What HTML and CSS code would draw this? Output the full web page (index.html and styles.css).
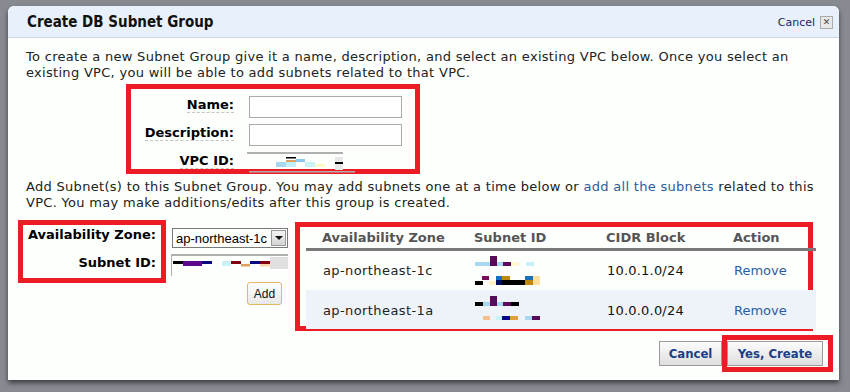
FILE: index.html
```html
<!DOCTYPE html>
<html lang="en">
<head>
    <link rel="stylesheet" href="styles.css">
    <meta charset="UTF-8">
    <title>Create DB Subnet Group</title>
</head>
<body>
    <div class="dialog">
        <div class="dialog-head">
            <h1>Create DB Subnet Group</h1>
            <div class="head-tools">
                <a href="#" class="cancel-link">Cancel</a>
                <span class="close-box">&#x2715;</span>
            </div>
        </div>

        <div class="dialog-body">
            <p class="intro">To create a new Subnet Group give it a name, description, and select an existing VPC below. Once you select an existing VPC, you will be able to add subnets related to that VPC.</p>

            <div class="mark group-fields">
                <div class="field-row">
                    <label class="field-label"><span>Name:</span></label>
                    <input type="text" class="text-input">
                </div>
                <div class="field-row">
                    <label class="field-label"><span>Description:</span></label>
                    <input type="text" class="text-input">
                </div>
                <div class="field-row">
                    <label class="field-label"><span>VPC ID:</span></label>
                    <div class="vpc-value">
                        <svg width="108" height="22" viewBox="0 0 108 22">
                            <rect x="0" y="0" width="96" height="2" fill="#b0b0b0"/>
                            <rect x="29" y="10" width="10" height="5" fill="#a8d8f0"/>
                            <rect x="39" y="5" width="10" height="1.5" fill="#000"/>
                            <rect x="39" y="8" width="10" height="2" fill="#e0a060"/>
                            <rect x="39" y="10" width="10" height="5" fill="#c0f0f8"/>
                            <rect x="49" y="7" width="9" height="3" fill="#8cc8f0"/>
                            <rect x="58" y="10" width="10" height="5" fill="#c8f4f8"/>
                            <rect x="68" y="12" width="10" height="3" fill="#fff8c8"/>
                            <rect x="88" y="5" width="8" height="13" fill="#e8e8e8"/>
                            <rect x="88" y="10" width="8" height="2" fill="#000"/>
                            <rect x="2" y="19" width="106" height="1.5" fill="#b0b0b0"/>
                        </svg>
                    </div>
                </div>
            </div>

            <p class="intro second">Add Subnet(s) to this Subnet Group. You may add subnets one at a time below or <a href="#">add all the subnets</a> related to this VPC. You may make additions/edits after this group is created.</p>

            <div class="subnet-area">
                <div class="mark zone-labels">
                    <div class="zone-label">Availability Zone:</div>
                    <div class="zone-label">Subnet ID:</div>
                </div>

                <div class="zone-inputs">
                    <div class="zone-select">
                        <span class="zone-value">ap-northeast-1c</span>
                        <span class="drop-btn"><span class="arrow"></span></span>
                    </div>
                    <div class="subnet-input">
                        <svg width="117" height="22" viewBox="0 0 117 22">
                            <rect x="0" y="0" width="117" height="2" fill="#b0b0b0"/>
                            <rect x="0" y="0" width="1" height="22" fill="#b0b0b0"/>
                            <rect x="2" y="7" width="10" height="3" fill="#000"/>
                            <rect x="12" y="7" width="19" height="5" fill="#5a0a8a"/>
                            <rect x="31" y="7" width="10" height="3" fill="#0a0a80"/>
                            <rect x="51" y="7" width="9" height="5" fill="#c8f4f8"/>
                            <rect x="60" y="7" width="10" height="3" fill="#800010"/>
                            <rect x="70" y="10" width="9" height="2.5" fill="#e0a060"/>
                            <rect x="79" y="7" width="10" height="3" fill="#0a0a80"/>
                            <rect x="89" y="7" width="10" height="3" fill="#800010"/>
                            <rect x="89" y="10" width="10" height="2.5" fill="#f8d8a8"/>
                            <rect x="99" y="3" width="18" height="12" fill="#e0e0e0"/>
                        </svg>
                    </div>
                    <button class="add-btn">Add</button>
                </div>

                <div class="mark table-mark">
                    <table class="subnet-table">
                        <thead>
                            <tr>
                                <th class="col-zone">Availability Zone</th>
                                <th class="col-subnet">Subnet ID</th>
                                <th class="col-cidr">CIDR Block</th>
                                <th class="col-action">Action</th>
                            </tr>
                        </thead>
                        <tbody>
                            <tr>
                                <td class="zone-cell">ap-northeast-1c</td>
                                <td>
                                    <svg width="70" height="32" viewBox="0 0 70 32">
                                        <rect x="1" y="7" width="17" height="4" fill="#a8d8f0"/>
                                        <rect x="16" y="1" width="7" height="10" fill="#5a0a5a"/>
                                        <rect x="23" y="7" width="6" height="4" fill="#a8d8f0"/>
                                        <rect x="29" y="7" width="8" height="4" fill="#5a0a5a"/>
                                        <rect x="37" y="7" width="8" height="4" fill="#fff8d0"/>
                                        <rect x="52" y="7" width="8" height="4" fill="#c8f4f8"/>
                                        <rect x="1" y="26" width="8" height="4" fill="#000"/>
                                        <rect x="8" y="21" width="7" height="4" fill="#7a0a5a"/>
                                        <rect x="15" y="26" width="7" height="4" fill="#fff4c0"/>
                                        <rect x="22" y="21" width="6" height="4" fill="#1a70b8"/>
                                        <rect x="22" y="25" width="6" height="5" fill="#001060"/>
                                        <rect x="28" y="21" width="8" height="4" fill="#c08810"/>
                                        <rect x="28" y="25" width="23" height="5" fill="#000"/>
                                        <rect x="51" y="21" width="8" height="4" fill="#1a70b8"/>
                                        <rect x="51" y="25" width="8" height="5" fill="#c08810"/>
                                        <rect x="59" y="21" width="7" height="9" fill="#fce0a0"/>
                                    </svg>
                                </td>
                                <td class="cidr">10.0.1.0/24</td>
                                <td><a href="#" class="remove-link">Remove</a></td>
                            </tr>
                            <tr class="alt">
                                <td class="zone-cell">ap-northeast-1a</td>
                                <td>
                                    <svg width="70" height="32" viewBox="0 0 70 32">
                                        <rect x="1" y="7" width="8" height="4" fill="#000"/>
                                        <rect x="9" y="7" width="7" height="4" fill="#a8d8f0"/>
                                        <rect x="16" y="1" width="7" height="10" fill="#5a0a5a"/>
                                        <rect x="23" y="7" width="6" height="4" fill="#a8d8f0"/>
                                        <rect x="29" y="7" width="8" height="4" fill="#5a0a5a"/>
                                        <rect x="37" y="7" width="8" height="4" fill="#000"/>
                                        <rect x="9" y="21" width="7" height="4" fill="#f4c090"/>
                                        <rect x="22" y="21" width="6" height="4" fill="#c8f4f8"/>
                                        <rect x="28" y="21" width="8" height="4" fill="#0a0a80"/>
                                        <rect x="36" y="21" width="8" height="4" fill="#e0a040"/>
                                        <rect x="51" y="21" width="7" height="4" fill="#a8d8f0"/>
                                        <rect x="58" y="21" width="8" height="4" fill="#5a0a5a"/>
                                    </svg>
                                </td>
                                <td class="cidr">10.0.0.0/24</td>
                                <td><a href="#" class="remove-link">Remove</a></td>
                            </tr>
                        </tbody>
                    </table>
                </div>
            </div>
        </div>

        <div class="dialog-foot">
            <button class="btn cancel-btn">Cancel</button>
            <div class="mark create-mark">
                <button class="btn">Yes, Create</button>
            </div>
        </div>
    </div>
</body>
</html>
```

FILE: styles.css
```css
body {
    margin: 0;
    padding: 6px 0 0 8px;
    height: 392px;
    box-sizing: border-box;
    overflow: hidden;
    background-color: #878a90;
    font-family: "DejaVu Sans", Verdana, sans-serif;
    font-size: 13px;
    color: #222;
}

a {
    color: #2a5d9f;
    text-decoration: none;
}

.dialog {
    width: 831px;
    height: 374px;
    background-color: #fdfffd;
    border-radius: 6px 6px 0 0;
    box-shadow: 0 3px 5px rgba(0, 0, 0, 0.55);
    display: flex;
    flex-direction: column;
}

.dialog-head {
    height: 31px;
    padding: 0 6px 0 19px;
    display: flex;
    align-items: center;
    justify-content: space-between;
    background-color: #e7f0fb;
    border-bottom: 1px solid #cbd8e8;
    border-radius: 6px 6px 0 0;
}

.dialog-head h1 {
    margin: 0;
    font-family: "DejaVu Sans Condensed", "DejaVu Sans", sans-serif;
    font-size: 15px;
    font-weight: bold;
    color: #111;
}

.head-tools {
    display: flex;
    align-items: center;
    gap: 5px;
    padding-top: 2px;
}

.cancel-link {
    color: #1c1c70;
    font-size: 11px;
}

.close-box {
    width: 11px;
    height: 11px;
    line-height: 11px;
    text-align: center;
    font-size: 9px;
    color: #444;
    background-color: #e8e8e8;
    border: 1px solid #aaa;
}

.dialog-body {
    padding: 11px 18px 0 18px;
}

.intro {
    margin: 0;
    line-height: 16px;
    letter-spacing: 0.3px;
}

.intro.second {
    margin-top: 5px;
}

.mark {
    border: 5px solid #ed1c24;
    box-sizing: border-box;
}

.group-fields {
    margin: 3px 0 0 100px;
    width: 294px;
    height: 90px;
    padding: 7px 0 0 0;
    display: flex;
    flex-direction: column;
    gap: 6px;
}

.field-row {
    display: flex;
    align-items: center;
    height: 22px;
}

.field-label {
    width: 103px;
    padding-bottom: 6px;
    text-align: right;
    font-weight: bold;
    color: #000;
    margin-right: 15px;
}

.field-label span {
    border-bottom: 1px dashed #c4c4c4;
}

.text-input {
    width: 153px;
    height: 22px;
    box-sizing: border-box;
    border: 1px solid #aaa;
    padding: 0;
    margin: 0;
}

.vpc-value {
    height: 22px;
    margin-left: -2px;
}

.subnet-area {
    margin: 9px 0 0 -8px;
    display: flex;
    align-items: flex-start;
}

.zone-labels {
    width: 148px;
    height: 63px;
    padding: 0 5px 0 0;
    display: flex;
    flex-direction: column;
    gap: 8px;
}

.zone-label {
    height: 20px;
    line-height: 20px;
    text-align: right;
    font-weight: bold;
    color: #000;
}

.zone-inputs {
    width: 117px;
    margin: 8px 0 0 5px;
    display: flex;
    flex-direction: column;
    align-items: flex-end;
}

.zone-select {
    width: 116px;
    height: 20px;
    box-sizing: border-box;
    border: 1px solid #7a7a7a;
    display: flex;
    align-items: center;
    justify-content: space-between;
    font-family: "Liberation Sans", Arial, sans-serif;
    font-size: 13px;
    color: #000;
}

.zone-value {
    padding-left: 3px;
}

.drop-btn {
    width: 15px;
    height: 16px;
    margin-right: 1px;
    background: linear-gradient(#f4f4f4, #d4d4d4);
    border: 1px solid #999;
    box-sizing: border-box;
    display: flex;
    align-items: center;
    justify-content: center;
}

.arrow {
    width: 0;
    height: 0;
    border-left: 4px solid transparent;
    border-right: 4px solid transparent;
    border-top: 4px solid #111;
}

.subnet-input {
    width: 117px;
    height: 22px;
    margin-top: 6px;
}

.add-btn {
    margin: 6px 6px 0 0;
    width: 35px;
    height: 23px;
    padding: 0;
    font-family: "Liberation Sans", Arial, sans-serif;
    font-size: 12px;
    color: #111;
    background: linear-gradient(#fdfdfd, #e8e8e8);
    border: 1px solid #e4b85c;
    border-radius: 3px;
}

.table-mark {
    margin: 2px 0 0 7px;
    width: 518px;
    height: 109px;
    padding-left: 6px;
}

.subnet-table {
    width: 510px;
    border-collapse: collapse;
    margin-right: -8px;
}

.subnet-table th {
    height: 21px;
    padding: 0 0 0 16px;
    text-align: left;
    font-weight: bold;
    color: #555;
    border-bottom: 3px solid #787878;
}

.col-zone {
    width: 136px;
}

.col-subnet {
    width: 116px;
}

.col-cidr {
    width: 111px;
}

.subnet-table td {
    height: 39px;
    padding: 0 0 0 17px;
    vertical-align: middle;
}

.subnet-table td svg {
    display: block;
    margin-left: -1px;
}

.subnet-table tr.alt td {
    height: 37px;
    padding-top: 2px;
    background-color: #eef3fa;
}

.zone-cell {
    letter-spacing: 0.4px;
}

.cidr {
    color: #111;
    letter-spacing: 0.2px;
}

.remove-link {
    color: #2a5d9f;
}

.dialog-foot {
    margin-top: auto;
    padding: 0 6px 8px 0;
    display: flex;
    justify-content: flex-end;
    align-items: center;
}

.btn {
    height: 25px;
    padding: 0;
    font-family: "DejaVu Sans Condensed", "DejaVu Sans", sans-serif;
    font-size: 13px;
    font-weight: bold;
    color: #1b3f86;
    background: linear-gradient(#fcfcfc, #dedede);
    border: 1px solid #9a9a9a;
}

.cancel-btn {
    width: 63px;
}

.create-mark {
    height: 37px;
    padding: 0 5px 0 0;
    display: flex;
    align-items: center;
}

.create-mark .btn {
    width: 96px;
}
```
